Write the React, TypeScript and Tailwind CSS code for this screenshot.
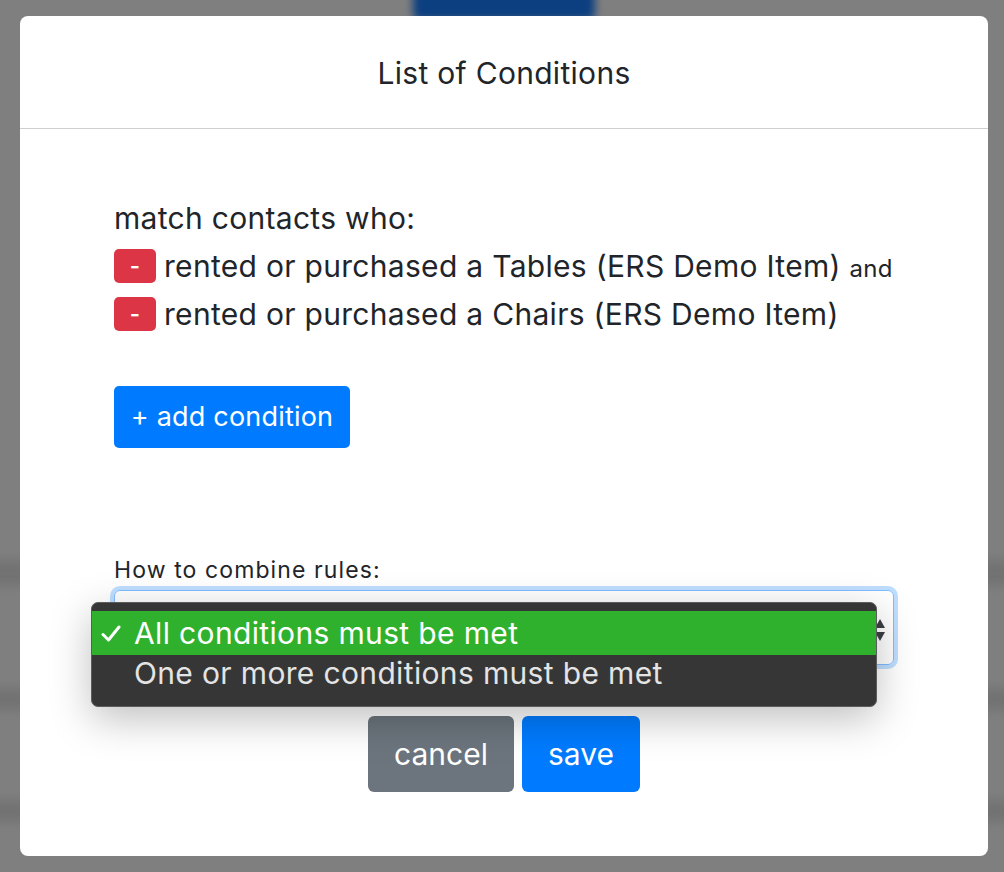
import React from "react";

const font = { fontFamily: "Inter, 'Noto Sans', 'Liberation Sans', sans-serif" };

function RemoveBtn() {
  return (
    <button className="flex h-[34px] w-[42px] shrink-0 items-center justify-center rounded-[5px] bg-[#dc3545] text-[22px] font-semibold leading-none text-white">
      -
    </button>
  );
}

export default function App() {
  return (
    <div
      className="relative h-[872px] w-[1004px] overflow-hidden bg-[#7f7f7f] pl-[20px] pr-[16px] pt-[16px] tracking-[0.3px] text-[#212529]"
      style={font}
    >
      {/* blurred page behind the overlay */}
      <div className="absolute left-[413px] top-[-20px] h-[40px] w-[182px] rounded-[6px] bg-[#0b3f80] blur-[4px]" />
      <div className="absolute left-[-10px] top-[560px] h-[26px] w-[1030px] bg-[#737373] blur-[5px]" />
      <div className="absolute left-[-10px] top-[688px] h-[22px] w-[1030px] bg-[#737373] blur-[5px]" />
      <div className="absolute left-[-10px] top-[800px] h-[22px] w-[1030px] bg-[#737373] blur-[5px]" />

      <div className="relative h-[840px] w-[968px] rounded-[8px] bg-white">
        <div className="flex h-[113px] items-center justify-center border-b border-[#cfcfcf]">
          <h1 className="pt-[2px] text-[30px] leading-none">List of Conditions</h1>
        </div>

        <div className="pl-[94px] pr-[60px] pt-[65px]">
          <div className="text-[30px] leading-[48px]">match contacts who:</div>
          <div className="flex h-[48px] items-center gap-[8px] text-[30px]">
            <RemoveBtn />
            <span className="whitespace-nowrap">
              rented or purchased a Tables (ERS Demo Item){" "}
              <span className="text-[24px]">and</span>
            </span>
          </div>
          <div className="flex h-[48px] items-center gap-[8px] text-[30px]">
            <RemoveBtn />
            <span className="whitespace-nowrap">rented or purchased a Chairs (ERS Demo Item)</span>
          </div>

          <button className="mt-[48px] flex h-[62px] w-[236px] items-center justify-center rounded-[5px] bg-[#007bff] text-[27px] tracking-[0.2px] text-white">
            + add condition
          </button>

          <div className="mt-[106px] text-[23px] leading-[32px] tracking-[1.1px]">How to combine rules:</div>

          <div className="relative mt-[4px] h-[75px] w-[780px] rounded-[6px] border border-[#80bdff] shadow-[0_0_0_4px_rgba(0,123,255,0.25)]">
            <svg className="absolute right-[8px] top-[25px]" width="10" height="28" viewBox="0 0 10 28">
              <path d="M0 12 L5 3 L10 12 Z" fill="#3a3f45" />
              <path d="M0 16 L5 25 L10 16 Z" fill="#3a3f45" />
            </svg>
          </div>

          <div className="mt-[51px] flex justify-center gap-[8px] pr-[34px]">
            <button className="flex h-[76px] w-[146px] items-center justify-center rounded-[6px] bg-[#6c757d] text-[30px] tracking-normal text-white">
              cancel
            </button>
            <button className="flex h-[76px] w-[118px] items-center justify-center rounded-[6px] bg-[#007bff] text-[30px] tracking-normal text-white">
              save
            </button>
          </div>
        </div>

        {/* native popup menu */}
        <div className="absolute left-[71px] top-[586px] h-[105px] w-[786px] rounded-[7px] border border-[#5c5c5c] bg-[#363636] py-[8px] tracking-[0.35px] shadow-[0_12px_40px_rgba(0,0,0,0.25)]">
          <div className="flex h-[44px] items-center bg-[#2fb12d] text-[30px] text-white">
            <span className="flex w-[42px] justify-start pl-[9px]">
              <svg width="20" height="17" viewBox="0 0 20 17">
                <path d="M2 9.5 L7.5 15 L18 2" fill="none" stroke="white" strokeWidth="3" strokeLinecap="round" strokeLinejoin="round" />
              </svg>
            </span>
            <span>All conditions must be met</span>
          </div>
          <div className="flex h-[36px] items-center text-[30px] text-[#e4e4e4]">
            <span className="w-[42px]" />
            <span>One or more conditions must be met</span>
          </div>
        </div>
      </div>
    </div>
  );
}
